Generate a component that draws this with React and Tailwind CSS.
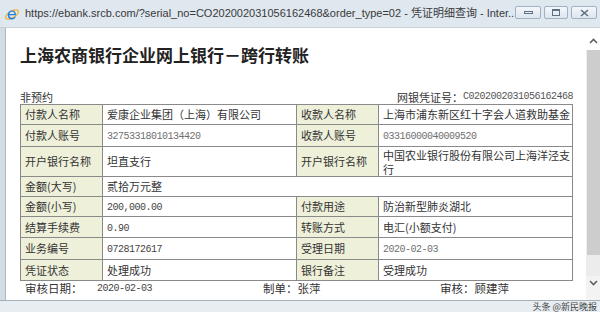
import React from "react";

const cjk = "font-['Noto_Sans_CJK_SC',sans-serif]";
const num = "font-['Liberation_Mono',monospace] text-[10px] tracking-[-0.5px]";

function IeIcon() {
  return (
    <svg width="16" height="16" viewBox="0 0 16 16" className="shrink-0">
      <ellipse cx="8" cy="8.5" rx="7.2" ry="3.2" transform="rotate(-30 8 8.5)" fill="none" stroke="#f2b33d" strokeWidth="1.3" />
      <path d="M12 9.3H5.2c.2 1.8 1.4 2.8 2.9 2.8 1.1 0 1.9-.5 2.4-1.3h1.4c-.7 1.6-2.1 2.6-3.9 2.6-2.5 0-4.3-1.9-4.3-4.5S5.5 4.4 8 4.4c2.5 0 4 1.9 4 4.3v.6zM5.3 8h5.3c-.2-1.5-1.1-2.4-2.6-2.4S5.5 6.5 5.3 8z" fill="#1e7fd6" />
    </svg>
  );
}

function WinButton({ children, w }) {
  return (
    <div className={`${w} h-[13px] flex items-center justify-center rounded-[2px] border border-[#9fb1c4] bg-gradient-to-b from-[#f4f7fa] to-[#dde5ee]`}>
      {children}
    </div>
  );
}

function TitleBar() {
  return (
    <div className="h-[28px] shrink-0 flex items-center pl-[4px] pr-[3px] bg-[#dfe7ef] border-b border-[#c6d0da]">
      <IeIcon />
      <div className="ml-[5px] flex-1 min-w-0 text-[11px] leading-none text-[#3a3a3a] whitespace-nowrap font-['Liberation_Sans','Noto_Sans_CJK_SC',sans-serif]">
        https://ebank.srcb.com/?serial_no=CO202002031056162468&amp;order_type=02 - 凭证明细查询 - Inter...
      </div>
      <div className="flex items-center gap-[3px] mb-[2px]">
        <WinButton w="w-[26px]">
          <div className="w-[9px] h-[3px] border border-[#5d6f82]" />
        </WinButton>
        <WinButton w="w-[24px]">
          <div className="w-[8px] h-[7px] border border-[#5d6f82] border-t-2" />
        </WinButton>
        <WinButton w="w-[26px]">
          <svg width="9" height="8" viewBox="0 0 9 8">
            <path d="M1 1l7 6M8 1L1 7" stroke="#5d6f82" strokeWidth="1.6" />
          </svg>
        </WinButton>
      </div>
    </div>
  );
}

function Scrollbar() {
  return (
    <div className="w-[15px] shrink-0 flex flex-col bg-[#f0f0f0]">
      <div className="h-[22px] flex items-end justify-center pb-[6px] bg-white">
        <svg width="9" height="6" viewBox="0 0 9 6">
          <path d="M1 5l3.5-3.5L8 5" fill="none" stroke="#606060" strokeWidth="1.6" />
        </svg>
      </div>
      <div className="h-[205px] mx-[1px] bg-[#cdcdcd]" />
      <div className="flex-1 bg-[#ececec]" />
      <div className="h-[24px] flex items-start justify-center pt-[4px] bg-[#f3f3f3]">
        <svg width="9" height="6" viewBox="0 0 9 6">
          <path d="M1 1l3.5 3.5L8 1" fill="none" stroke="#606060" strokeWidth="1.6" />
        </svg>
      </div>
    </div>
  );
}

const L = "border border-[#8a8a8a] bg-[#eef0da] pl-[4px] text-[11px] leading-[13px] text-[#333] whitespace-nowrap";
const V = "border border-[#8a8a8a] bg-white pl-[4px] text-[11px] leading-[13px] text-[#333] whitespace-nowrap";

const rows = [
  { h: "h-[20px]", a: "付款人名称", b: "爱康企业集团（上海）有限公司", c: "收款人名称", d: "上海市浦东新区红十字会人道救助基金" },
  { h: "h-[22px]", a: "付款人账号", b: "32753318010134420", bn: "light", c: "收款人账号", d: "03316000040009520", dn: "light" },
  { h: "h-[30px]", a: "开户银行名称", b: "坦直支行", c: "开户银行名称", d: "wrap" },
  { h: "h-[20px]", a: "金额(大写)", b: "贰拾万元整", span: true },
  { h: "h-[20px]", a: "金额(小写)", b: "200,000.00", bn: "dark", c: "付款用途", d: "防治新型肺炎湖北" },
  { h: "h-[21px]", a: "结算手续费", b: "0.90", bn: "dark", c: "转账方式", d: "电汇(小额支付)" },
  { h: "h-[22px]", a: "业务编号", b: "0728172617", bn: "dark", c: "受理日期", d: "2020-02-03", dn: "light" },
  { h: "h-[21px]", a: "凭证状态", b: "处理成功", c: "银行备注", d: "受理成功" },
];

function Value({ text, kind }) {
  if (kind === "light") return <span className={`${num} text-[#707070]`}>{text}</span>;
  if (kind === "dark") return <span className={`${num} text-[#444]`}>{text}</span>;
  if (text === "wrap")
    return (
      <span className="flex flex-col leading-[14px]">
        <span>中国农业银行股份有限公司上海洋泾支</span>
        <span>行</span>
      </span>
    );
  return <span>{text}</span>;
}

export default function App() {
  return (
    <div className={`w-[600px] h-[312px] overflow-hidden flex flex-col bg-white ${cjk} relative`}>
      <TitleBar />
      <div className="flex flex-1 min-h-0">
        <div className="w-[6px] shrink-0 bg-[#d3dbe3] border-r border-[#aeb8c2]" />
        <main className="flex-1 pl-[14px] pr-[13px] pt-[18px]">
          <h1 className="text-[17px] leading-[17px] font-bold text-[#222]">
            上海农商银行企业网上银行－跨行转账
          </h1>
          <div className="mt-[27px] h-[14px] flex items-center justify-between text-[11px] leading-none text-[#333]">
            <span>非预约</span>
            <span className="flex items-center">
              网银凭证号：<span className={`${num} text-[#555]`}>C0202002031056162468</span>
            </span>
          </div>
          <table className="w-[552px] table-fixed border-collapse border border-[#7a7a7a]">
            <colgroup>
              <col className="w-[82px]" />
              <col className="w-[194px]" />
              <col className="w-[82px]" />
              <col className="w-[194px]" />
            </colgroup>
            <tbody>
              {rows.map((r) => (
                <tr key={r.a} className={r.h}>
                  <td className={L}>{r.a}</td>
                  {r.span ? (
                    <td className={V} colSpan={3}>{r.b}</td>
                  ) : (
                    <>
                      <td className={V}><Value text={r.b} kind={r.bn} /></td>
                      <td className={L}>{r.c}</td>
                      <td className={`${V} pl-[3px]`}><Value text={r.d} kind={r.dn} /></td>
                    </>
                  )}
                </tr>
              ))}
            </tbody>
          </table>
          <div className="h-[15px] flex items-center pl-[5px] text-[11.5px] leading-none text-[#333]">
            <span className="w-[72px]">审核日期：</span>
            <span className={`w-[166px] ${num} text-[#444]`}>2020-02-03</span>
            <span className="w-[177px]">制单：张萍</span>
            <span>审核：顾建萍</span>
          </div>
        </main>
        <Scrollbar />
      </div>
      <div className="h-[12px] shrink-0 border-t border-[#a6b0ba] bg-[#e8edf2]" />
      <div className="absolute right-[3px] top-[302px] text-[9px] leading-[9px] text-[#444] whitespace-nowrap">
        头条 @新民晚报
      </div>
    </div>
  );
}
